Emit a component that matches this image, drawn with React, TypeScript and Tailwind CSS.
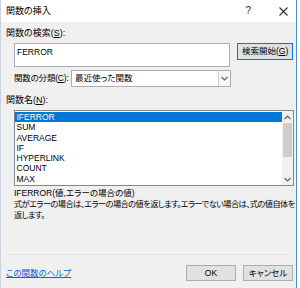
import React from "react";

const functions = ["IFERROR", "SUM", "AVERAGE", "IF", "HYPERLINK", "COUNT", "MAX"];

function Chevron({ up = false }: { up?: boolean }) {
  return (
    <svg width="7" height="5" viewBox="0 0 7 5" fill="none" stroke="#606060" strokeWidth="1.1">
      {up ? <path d="M0.5 4L3.5 1L6.5 4" /> : <path d="M0.5 1L3.5 4L6.5 1" />}
    </svg>
  );
}

export default function App() {
  return (
    <div className="w-[300px] h-[288px] flex overflow-hidden bg-white text-[8.5px] text-black font-['Liberation_Sans','Noto_Sans_CJK_JP',sans-serif] [font-feature-settings:'palt']">
      <div className="w-[297px] h-full flex flex-col bg-[#f0f0f0] border-l border-l-[#c8d3df] border-r border-r-[#4a90d0]">
        {/* Title bar */}
        <div className="h-[22px] shrink-0 bg-white flex items-center pl-[5px]">
          <span className="text-[9px] leading-none">関数の挿入</span>
          <span className="ml-auto text-[10px] leading-none text-[#333]">?</span>
          <svg className="ml-[28px] mr-[8px]" width="9" height="9" viewBox="0 0 9 9" stroke="#333" strokeWidth="1.1">
            <path d="M0.5 0.5L8.5 8.5M8.5 0.5L0.5 8.5" />
          </svg>
        </div>

        {/* Body */}
        <div className="flex flex-col pl-[5px] pr-[3px]">
          <div className="mt-[6px] h-[10px] leading-[10px] text-[9px]">
            関数の検索(<span className="underline">S</span>):
          </div>

          <div className="mt-[5px] flex items-start">
            <div className="ml-[8px] w-[217px] h-[24px] bg-white border border-[#abadb3] pl-[2px] pt-[3px] leading-[10px]">
              FERROR
            </div>
            <div className="ml-[7px] w-[56px] h-[17px] bg-[#e1e1e1] border border-[#0078d7] flex items-center justify-center text-[8.5px] leading-none whitespace-nowrap">
              検索開始(<span className="underline">G</span>)
            </div>
          </div>

          <div className="mt-[3px] flex items-center">
            <div className="ml-[8px] w-[57px] shrink-0 text-[8.5px] leading-none whitespace-nowrap tracking-[-0.2px]">
              関数の分類(<span className="underline">C</span>):
            </div>
            <div className="w-[160px] shrink-0 h-[17px] bg-white border border-[#adadad] flex items-stretch">
              <div className="flex-1 flex items-center pl-[3px] leading-none">最近使った関数</div>
              <div className="w-[12px] border-l border-[#d0d0d0] bg-[#f7f7f7] flex items-center justify-center">
                <Chevron />
              </div>
            </div>
          </div>

          <div className="mt-[8px] h-[10px] leading-[10px] text-[9px]">
            関数名(<span className="underline">N</span>):
          </div>

          {/* Function list */}
          <div className="mt-[5px] ml-[8px] w-[280px] h-[76px] bg-white border border-[#828790] flex">
            <div className="flex-1 pt-[1px]">
              {functions.map((f, i) => (
                <div
                  key={f}
                  className={
                    i === 0
                      ? "h-[10.3px] leading-[10.3px] pl-[1.5px] bg-[#0078d7] text-white"
                      : "h-[10.3px] leading-[10.3px] pl-[1.5px]"
                  }
                >
                  {f}
                </div>
              ))}
            </div>
            <div className="w-[11px] bg-[#f0f0f0] flex flex-col items-center">
              <div className="h-[12px] flex items-center justify-center">
                <Chevron up />
              </div>
              <div className="w-[9px] h-[34px] bg-[#cdcdcd]" />
              <div className="mt-auto h-[12px] flex items-center justify-center">
                <Chevron />
              </div>
            </div>
          </div>

          <div className="mt-[2px] ml-[8px] h-[10px] leading-[10px]">IFERROR(値,エラーの場合の値)</div>
          <div className="mt-[2px] ml-[8px] leading-[10.5px] text-[8.2px] whitespace-nowrap tracking-[-0.55px]">
            式がエラーの場合は、エラーの場合の値を返します。エラーでない場合は、式の値自体を
            <br />
            返します。
          </div>

          <div className="mt-[33px] mr-[4px] h-px bg-[#dfdfdf]" />

          <div className="mt-[10px] h-[16px] flex items-center">
            <span className="text-[#0066cc] underline text-[8.5px] leading-none">この関数のヘルプ</span>
            <div className="ml-auto w-[50px] h-[16px] bg-[#e1e1e1] border border-[#adadad] flex items-center justify-center leading-none">
              OK
            </div>
            <div className="ml-[7px] w-[50px] h-[16px] bg-[#e1e1e1] border border-[#adadad] flex items-center justify-center leading-none">
              キャンセル
            </div>
          </div>
        </div>
      </div>
      <div className="flex-1 bg-white" />
    </div>
  );
}
